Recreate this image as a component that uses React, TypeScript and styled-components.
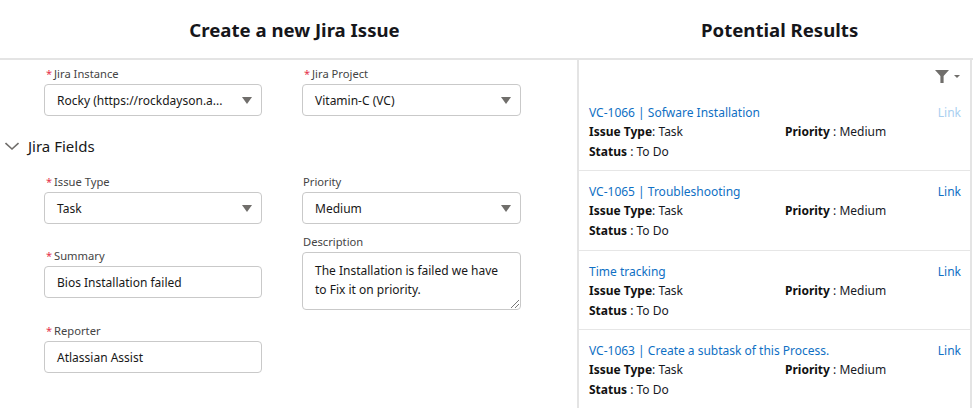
import React from 'react';
import styled, { createGlobalStyle } from 'styled-components';

const Global = createGlobalStyle`
  html, body { margin: 0; padding: 0; background: #fff; }
  body { width: 973px; height: 408px; overflow: hidden; font-family: "Noto Sans", "Open Sans", sans-serif; font-size: 12px; color: #181818; }
`;

const Page = styled.div`
  width: 973px;
  height: 408px;
  display: flex;
  flex-direction: column;
  overflow: hidden;
`;
const Header = styled.header`
  height: 58px;
  flex: none;
  display: grid;
  grid-template-columns: 589px 1fr;
  border-bottom: 2px solid #e4e4e4;
`;
const Title = styled.h1`
  margin: 0;
  font-size: 18.6px;
  font-weight: 700;
  line-height: 60px;
  height: 58px;
  text-align: center;
  color: #16161a;
  white-space: nowrap;
`;
const RightTitle = styled(Title)`
  text-align: left;
  padding-left: 112px;
`;
const Body = styled.div`
  flex: 1;
  display: flex;
  min-height: 0;
`;
const LeftPane = styled.section`
  width: 577px;
  flex: none;
  padding-top: 6px;
  box-sizing: border-box;
`;
const FieldRow = styled.div`
  display: grid;
  grid-template-columns: 218px 219px;
  column-gap: 40px;
  padding-left: 44px;
`;
const Column = styled.div`
  display: flex;
  flex-direction: column;
`;
const Field = styled.div<{ $gap?: number }>`
  display: flex;
  flex-direction: column;
  margin-bottom: ${(p) => p.$gap ?? 0}px;
`;
const Label = styled.label`
  height: 18px;
  line-height: 16px;
  font-size: 11.2px;
  color: #444;
  padding-left: 1px;
  padding-bottom: 2px;
  box-sizing: border-box;
  white-space: nowrap;
  display: flex;
  align-items: center;
`;
const Star = styled.span`
  color: #e5344c;
  margin: 0 2px 0 1px;
  font-size: 11px;
`;
const Control = styled.div<{ $tall?: boolean }>`
  box-sizing: border-box;
  height: ${(p) => (p.$tall ? 58 : 32)}px;
  border: 1px solid #c9c9c9;
  border-radius: 4px;
  padding: ${(p) => (p.$tall ? '8px 12px' : '0 12px')};
  display: ${(p) => (p.$tall ? 'block' : 'flex')};
  align-items: center;
  justify-content: space-between;
  font-size: 12px;
  line-height: 19px;
  color: #181818;
  background: #fff;
  position: relative;
  white-space: ${(p) => (p.$tall ? 'normal' : 'nowrap')};
`;
const Arrow = styled.span`
  width: 0;
  height: 0;
  border-left: 5.5px solid transparent;
  border-right: 5.5px solid transparent;
  border-top: 7px solid #706e6b;
  margin-right: -3px;
`;
const Grip = styled.svg`
  position: absolute;
  right: 0;
  bottom: 0;
`;
const SectionHead = styled.div`
  display: flex;
  align-items: center;
  gap: 9px;
  height: 30px;
  margin: 15px 0 13px 0;
  padding-left: 5px;
  font-size: 15px;
  color: #181818;
`;
const RightPane = styled.section`
  width: 395px;
  flex: none;
  border-left: 2px solid #e4e4e4;
  border-right: 2px solid #e4e4e4;
  box-sizing: border-box;
`;
const FilterBar = styled.div`
  height: 32px;
  display: flex;
  align-items: flex-start;
  justify-content: flex-end;
  gap: 5px;
  padding: 10px 10px 0 0;
  box-sizing: border-box;
`;
const Result = styled.article`
  padding: 11px 9px 0 10px;
  height: 79.4px;
  box-sizing: border-box;
  border-bottom: 1px solid #e6e6e6;
  display: flex;
  flex-direction: column;
  &:last-child { border-bottom: none; }
`;
const TitleRow = styled.div`
  display: flex;
  justify-content: space-between;
  height: 19px;
  line-height: 20px;
  font-size: 12px;
`;
const ResultLink = styled.a`
  color: #0f70c4;
  text-decoration: none;
`;
const LinkAction = styled.a<{ $dim?: boolean }>`
  color: ${(p) => (p.$dim ? '#a9cff0' : '#0f70c4')};
`;
const MetaRow = styled.div`
  display: grid;
  grid-template-columns: 196px 1fr;
  height: 20px;
  line-height: 20px;
  font-size: 12px;
  color: #16191f;
`;
const Strong = styled.b`
  font-weight: 700;
  color: #111;
`;

const Sel = ({ children }: { children: React.ReactNode }) => (
  <Control>
    <span>{children}</span>
    <Arrow />
  </Control>
);

const items = [
  { t: 'VC-1066 | Sofware Installation', dim: true },
  { t: 'VC-1065 | Troubleshooting' },
  { t: 'Time tracking' },
  { t: 'VC-1063 | Create a subtask of this Process.' },
];

export default function App() {
  return (
    <Page>
      <Global />
      <Header>
        <Title>Create a new Jira Issue</Title>
        <RightTitle>Potential Results</RightTitle>
      </Header>
      <Body>
        <LeftPane>
          <FieldRow>
            <Field>
              <Label><Star>*</Star>Jira Instance</Label>
              <Sel>Rocky (https://rockdayson.a...</Sel>
            </Field>
            <Field>
              <Label><Star>*</Star>Jira Project</Label>
              <Sel>Vitamin-C (VC)</Sel>
            </Field>
          </FieldRow>
          <SectionHead>
            <svg width="14" height="14" viewBox="0 0 14 14" fill="none" stroke="#706e6b" strokeWidth="1.6">
              <path d="M0.5 4 L7 10 L13.5 4" />
            </svg>
            Jira Fields
          </SectionHead>
          <FieldRow>
            <Column>
              <Field $gap={24}>
                <Label><Star>*</Star>Issue Type</Label>
                <Sel>Task</Sel>
              </Field>
              <Field $gap={25}>
                <Label><Star>*</Star>Summary</Label>
                <Control>Bios Installation failed</Control>
              </Field>
              <Field>
                <Label><Star>*</Star>Reporter</Label>
                <Control>Atlassian Assist</Control>
              </Field>
            </Column>
            <Column>
              <Field $gap={10}>
                <Label>Priority</Label>
                <Sel>Medium</Sel>
              </Field>
              <Field>
                <Label>Description</Label>
                <Control $tall>
                  The Installation is failed we have to Fix it on priority.
                  <Grip width="10" height="10" viewBox="0 0 10 10" stroke="#555" strokeWidth="0.8">
                    <path d="M1 9 L9 1 M5 9 L9 5" />
                  </Grip>
                </Control>
              </Field>
            </Column>
          </FieldRow>
        </LeftPane>
        <RightPane>
          <FilterBar>
            <svg width="14" height="13" viewBox="0 0 14 13" fill="#706e6b">
              <path d="M0 0 H14 L8.6 6 V13 H5.4 V6 Z" />
            </svg>
            <svg width="6" height="13" viewBox="0 0 6 13" fill="#706e6b">
              <path d="M0 5 H6 L3 8 Z" />
            </svg>
          </FilterBar>
          {items.map((it) => (
            <Result key={it.t}>
              <TitleRow>
                <ResultLink>{it.t}</ResultLink>
                <LinkAction $dim={it.dim}>Link</LinkAction>
              </TitleRow>
              <MetaRow>
                <span><Strong>Issue Type</Strong>: Task</span>
                <span><Strong>Priority</Strong> : Medium</span>
              </MetaRow>
              <MetaRow>
                <span><Strong>Status</Strong> : To Do</span>
              </MetaRow>
            </Result>
          ))}
        </RightPane>
      </Body>
    </Page>
  );
}
